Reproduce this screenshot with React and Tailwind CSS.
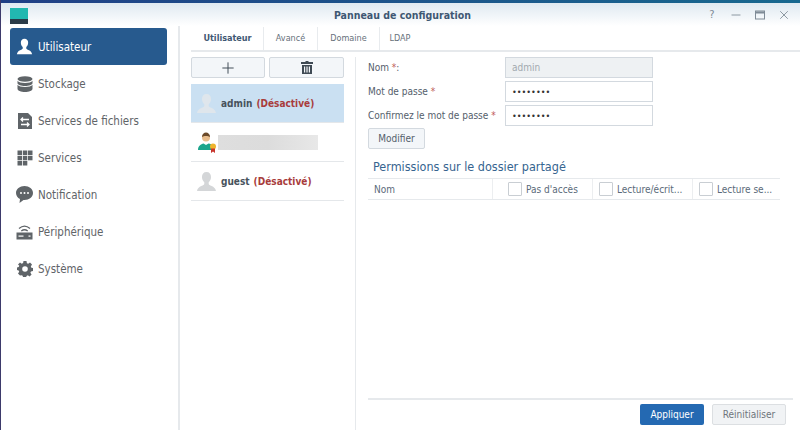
import { Plus, Minus, X } from "lucide-react"

const font = "font-['DejaVu_Sans_Condensed','DejaVu_Sans',sans-serif]"

function UserIcon({ className }) {
  return (
    <svg className={className} viewBox="0 0 20 20" fill="currentColor">
      <path d="M10 1C7.200 1 5.700 3 5.700 5.600c0 2.200 1 4 2.200 5v1.600c0 .7-.6 1.100-1.600 1.500C4.400 14.400 1.500 15.500 1 19h18c-.5-3.500-3.400-4.600-5.300-5.300-1-.4-1.600-.8-1.600-1.500v-1.600c1.200-1 2.200-2.800 2.200-5C14.300 3 12.800 1 10 1z" />
    </svg>
  )
}

function StorageIcon() {
  return (
    <svg className="h-4 w-4" viewBox="0 0 16 16" fill="currentColor">
      <ellipse cx="8" cy="3" rx="7.500" ry="2.800" />
      <path d="M.5 4.800C1.500 6.300 4.500 7 8 7s6.500-.7 7.500-2.200v2.400C15.500 8.800 12 10 8 10S.5 8.800.5 7.200z" />
      <path d="M.5 8.800C1.500 10.300 4.500 11 8 11s6.500-.7 7.500-2.200v3.900C15.500 14.600 12 16 8 16S.5 14.600.5 12.700z" />
    </svg>
  )
}

function FileServiceIcon() {
  return (
    <svg className="h-4 w-4" viewBox="0 0 16 16">
      <path d="M1 0h10l4 4v12H1z" fill="currentColor" />
      <path d="M12 6.500H4M6 4.500l-2 2 2 2M4 11.500h8M10 9.500l2 2-2 2" stroke="#fff" strokeWidth="1.300" fill="none" />
    </svg>
  )
}

function GridIcon() {
  return (
    <svg className="h-4 w-4" viewBox="0 0 16 16" fill="currentColor">
      <rect x="0.500" y="0.500" width="4.500" height="4.500" />
      <rect x="5.800" y="0.500" width="4.500" height="4.500" />
      <rect x="11" y="0.500" width="4.500" height="4.500" />
      <rect x="0.500" y="5.800" width="4.500" height="4.500" />
      <rect x="5.800" y="5.800" width="4.500" height="4.500" />
      <rect x="11" y="5.800" width="4.500" height="4.500" />
      <rect x="0.500" y="11" width="4.500" height="4.500" />
      <rect x="5.800" y="11" width="4.500" height="4.500" />
    </svg>
  )
}

function ChatIcon() {
  return (
    <svg className="h-[17px] w-[17px]" viewBox="0 0 17 17">
      <path d="M8.500 0C3.800 0 0 3 0 7c0 2.600 1.600 4.700 4 6l-.5 4 4-3h1c4.700 0 8.500-3 8.500-7s-3.800-7-8.500-7z" fill="currentColor" />
      <circle cx="5" cy="7" r="1" fill="#fff" />
      <circle cx="8.500" cy="7" r="1" fill="#fff" />
      <circle cx="12" cy="7" r="1" fill="#fff" />
    </svg>
  )
}

function DeviceIcon() {
  return (
    <svg className="h-4 w-[17px]" viewBox="0 0 17 16">
      <path d="M3 4.500C6.500 1.500 10.500 1.500 14 4.500M5.300 7c2-1.600 4.400-1.600 6.400 0" stroke="currentColor" strokeWidth="1.300" fill="none" />
      <rect x="0.500" y="8.500" width="16" height="7" fill="currentColor" />
      <rect x="2.500" y="11.500" width="5" height="1.200" fill="#fff" />
      <rect x="12.500" y="11.500" width="2" height="1.200" fill="#fff" />
    </svg>
  )
}

function GearIcon() {
  return (
    <svg className="h-4 w-4" viewBox="0 0 16 16">
      <path
        d="M6.500 0h3l.4 2.200 1.300.6L13 1.500l2 2-1.200 1.900.6 1.300 1.600.4v3l-2 .4-.6 1.300 1.200 1.700-2 2-1.800-1.200-1.300.6-.4 1.800h-3l-.4-1.900-1.300-.5L3 14.500l-2-2 1.200-1.800-.6-1.300L0 9V6.500l1.700-.4.6-1.300L1 3.500l2-2 1.700 1.200 1.400-.6z"
        fill="currentColor"
      />
      <circle cx="8" cy="8" r="2.800" fill="#fff" />
    </svg>
  )
}

function TrashIcon() {
  return (
    <svg className="h-[13px] w-[12px]" viewBox="0 0 12 13" fill="#3f4a54">
      <path d="M4.500 0h3v1H12v2H0V1h4.500z" />
      <path d="M1 4h10v9H1zM3 5.500v6h1.200v-6zM5.400 5.500v6h1.200v-6zM7.800 5.500v6H9v-6z" fillRule="evenodd" />
    </svg>
  )
}

const navItems = [
  { label: "Utilisateur", icon: <UserIcon className="h-[17px] w-[17px]" />, active: true },
  { label: "Stockage", icon: <StorageIcon /> },
  { label: "Services de fichiers", icon: <FileServiceIcon /> },
  { label: "Services", icon: <GridIcon /> },
  { label: "Notification", icon: <ChatIcon /> },
  { label: "Périphérique", icon: <DeviceIcon /> },
  { label: "Système", icon: <GearIcon /> },
]

function Sidebar() {
  return (
    <div className="flex w-[177px] shrink-0 flex-col pl-[9px] pr-[11px] pt-[2px]">
      {navItems.map((item) => (
        <div
          key={item.label}
          className={`flex h-[37px] items-center gap-[5px] rounded-[3px] pl-[6px] text-[11.500px] ${
            item.active ? "bg-[#275a8e] text-white" : "text-[#5f6468]"
          }`}
        >
          <span className={`flex w-[17px] justify-center ${item.active ? "text-white" : "text-[#5f6468]"}`}>
            {item.icon}
          </span>
          <span className="pt-[2px]">{item.label}</span>
        </div>
      ))}
    </div>
  )
}

function Tabs() {
  return (
    <div className="flex h-[26px] items-stretch border-b-2 border-[#e6e9ec] pl-[1px] pt-[1px] text-[9px] text-[#66707a]">
      <div className="flex w-[72px] items-center justify-center border-r border-[#e8ebee] font-bold text-[#3f5873]">
        Utilisateur
      </div>
      <div className="flex w-[54px] items-center justify-center border-r border-[#e8ebee]">Avancé</div>
      <div className="flex w-[62px] items-center justify-center border-r border-[#e8ebee]">Domaine</div>
      <div className="flex w-[40px] items-center justify-center">LDAP</div>
    </div>
  )
}

function UserRow({ name, selected, children }) {
  return (
    <div className={`flex h-[39px] items-center border-b border-[#e4e7ea] ${selected ? "bg-[#cae0f2]" : ""}`}>
      <UserIcon className={`ml-[5px] h-[21px] w-[21px] ${selected ? "text-[#dfe6ec]" : "text-[#d4d6d8]"}`} />
      <span className="ml-[4px] text-[10px] font-bold text-[#47525c]">{name}</span>
      <span className="ml-[4px] text-[10px] font-bold text-[#a83c3c]">{children}</span>
    </div>
  )
}

function UserList() {
  return (
    <div className="flex w-[153px] flex-col">
      <div className="flex h-[21px] gap-[4px]">
        <button className="flex w-[74px] items-center justify-center rounded-[2px] border border-[#d3d9df] bg-[#f3f6f9] text-[#3f4a54]">
          <Plus className="h-[18px] w-[18px]" strokeWidth={1.300} />
        </button>
        <button className="flex w-[75px] items-center justify-center rounded-[2px] border border-[#d3d9df] bg-[#f3f6f9]">
          <TrashIcon />
        </button>
      </div>
      <div className="mt-[6px]">
        <UserRow name="admin" selected>
          (Désactivé)
        </UserRow>
        <div className="flex h-[39px] items-center border-b border-[#e4e7ea]">
          <svg className="ml-[6px] h-[21px] w-[21px]" viewBox="0 0 21 21">
            <circle cx="9" cy="5.500" r="4" fill="#e8bd8c" />
            <path d="M5 5c0-3 2-4.500 4-4.500S13 2 13 5c-1.500-1.500-6.500-1.500-8 0z" fill="#6a4a2a" />
            <path d="M1 18c0-4 3-6 5.500-6.500L9 13l2.500-1.500c2 .4 3 1 4 2.500v4z" fill="#1ca58c" />
            <circle cx="16" cy="14.500" r="3" fill="#eeb52e" />
            <path d="M14 16.500h4V21l-2-1.500-2 1.500z" fill="#c8362e" />
          </svg>
          <div className="h-[15px] w-[100px] bg-gradient-to-r from-[#dedede] via-[#dcdcdc] to-[#e8e8e8]" />
        </div>
        <UserRow name="guest">(Désactivé)</UserRow>
      </div>
    </div>
  )
}

function Field({ label, suffix, value, disabled }) {
  return (
    <div className="flex h-[21px] items-center">
      <label className="w-[137px] text-[10px] text-[#54606b]">
        {label} <span className="text-[#c05a5a]">*</span>
        {suffix}
      </label>
      <input
        readOnly
        type={disabled ? "text" : "password"}
        value={value}
        className={`h-[21px] w-[148px] border border-[#d3d9df] px-[6px] outline-none ${font} ${
          disabled ? "bg-[#eef1f3] text-[10px] text-[#a2a9af]" : "bg-white text-[9px] text-[#333]"
        }`}
      />
    </div>
  )
}

function PermissionHead({ className, label }) {
  return (
    <div className={`flex items-center gap-[4px] border-l border-[#eceef0] ${className}`}>
      <span className="h-[14px] w-[14px] shrink-0 rounded-[1px] border border-[#c9ced3] bg-white" />
      <span className="whitespace-nowrap text-[10px] text-[#5a6a79]">{label}</span>
    </div>
  )
}

function UserForm() {
  return (
    <div className="flex min-w-0 flex-1 flex-col border-l border-[#e6e9ec] pl-[12px] pr-[7px]">
      <div className="flex flex-col gap-[3px]">
        <Field label="Nom" suffix=":" value="admin" disabled />
        <Field label="Mot de passe" value="password" />
        <Field label="Confirmez le mot de passe" value="password" />
      </div>
      <button className="mt-[2px] h-[21px] w-[57px] rounded-[2px] border border-[#d3d9df] bg-[#f3f6f9] text-[10px] text-[#54606b]">
        Modifier
      </button>
      <div className="ml-[5px] mt-[9px] text-[12.500px] leading-[17px] text-[#36648f]">
        Permissions sur le dossier partagé
      </div>
      <div className="mr-[13px] mt-[3px] flex h-[22px] border-y border-[#e6e9ec]">
        <div className="flex w-[124px] items-center pl-[6px] text-[10px] text-[#5a6a79]">Nom</div>
        <PermissionHead className="w-[100px] pl-[15px]" label="Pas d'accès" />
        <PermissionHead className="w-[100px] pl-[6px]" label="Lecture/écrit..." />
        <PermissionHead className="w-[88px] pl-[6px]" label="Lecture se..." />
      </div>
      <div className="flex-1" />
      <div className="flex h-[32px] items-end justify-end gap-[8px] border-t-2 border-[#e6e9ec] pb-[5px] pr-[7px]">
        <button className="h-[21px] w-[64px] rounded-[2px] bg-[#2469b2] text-[10px] text-white">
          Appliquer
        </button>
        <button className="h-[21px] w-[74px] rounded-[2px] border border-[#dcdfe2] bg-[#f1f3f5] text-[10px] text-[#6e757b]">
          Réinitialiser
        </button>
      </div>
    </div>
  )
}

export default function App() {
  return (
    <div className={`flex h-[430px] w-[800px] flex-col overflow-hidden border-l border-[#3d3a6b] bg-white ${font}`}>
      <div className="h-[3px] shrink-0 bg-gradient-to-r from-[#1f3f86] to-[#17688f]" />
      {/* Title bar */}
      <div className="flex h-[23px] shrink-0 items-center bg-gradient-to-b from-[#dfe9f1] to-white pl-[9px] pr-[9px]">
        <div className="mt-[2px] h-[16px] w-[18px] bg-gradient-to-b from-[#22b8b0] from-70% to-[#2a3b48] to-70%" />
        <div className="flex-1 pl-[72px] pt-[3px] text-center text-[10.500px] font-bold text-[#3f5873]">
          Panneau de configuration
        </div>
        <div className="flex items-center gap-[10px] text-[#7f8b96]">
          <span className="w-[14px] text-center text-[11px] leading-none">?</span>
          <Minus className="h-[14px] w-[14px]" strokeWidth={1.500} />
          <svg className="h-[14px] w-[14px]" viewBox="0 0 14 14" fill="none" stroke="currentColor">
            <rect x="2.500" y="3" width="9" height="8" />
            <path d="M2.500 4.500h9" strokeWidth="2" />
          </svg>
          <X className="h-[14px] w-[14px]" strokeWidth={1.500} />
        </div>
      </div>

      <div className="flex min-h-0 flex-1">
        <Sidebar />
        <div className="flex min-w-0 flex-1 flex-col border-l-2 border-[#e6e9ec] pl-[11px]">
          <Tabs />
          <div className="flex min-h-0 flex-1 pt-[5px]">
            <UserList />
            <div className="w-[11px]" />
            <UserForm />
          </div>
        </div>
      </div>
    </div>
  )
}
